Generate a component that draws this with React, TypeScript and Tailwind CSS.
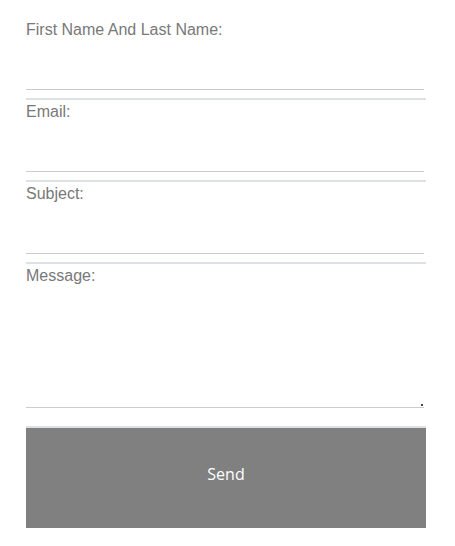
import React from "react";

function Field({ label, first }: { label: string; first?: boolean }) {
  return (
    <div className={first ? "" : "border-t-2 border-[#dde0e4] pt-[2px]"}>
      <label className="block text-[16px] leading-[20px] text-[#787878] [font-family:'Liberation_Sans',Arial,sans-serif]">
        {label}
      </label>
      <input
        type="text"
        className="block h-[50px] w-[398px] border-0 border-b border-[#cccccc] bg-transparent outline-none"
      />
      <div className="h-[8px]" />
    </div>
  );
}

export default function App() {
  return (
    <div className="min-h-[546px] w-[455px] bg-white pl-[26px] pt-[20px]">
      <form className="w-[400px]" onSubmit={(e) => e.preventDefault()}>
        <Field label="First Name And Last Name:" first />
        <Field label="Email:" />
        <Field label="Subject:" />
        <div className="border-t-2 border-[#dde0e4] pt-[2px]">
          <label className="block text-[16px] leading-[20px] text-[#787878] [font-family:'Liberation_Sans',Arial,sans-serif]">
            Message:
          </label>
          <div className="relative w-[398px]">
            <textarea className="block h-[122px] w-[398px] resize-none border-0 border-b border-[#cccccc] bg-transparent outline-none" />
            <span className="absolute right-[1px] bottom-[2px] h-[2px] w-[2px] bg-[#444444]" />
          </div>
          <div className="h-[18px]" />
        </div>
        <div className="border-t-2 border-[#dde0e4]">
          <button
            type="submit"
            className="flex h-[100px] w-[400px] items-center justify-center bg-[#808080] pb-[9px] text-[16px] text-white [font-family:'Open_Sans',sans-serif]"
          >
            Send
          </button>
        </div>
      </form>
    </div>
  );
}
